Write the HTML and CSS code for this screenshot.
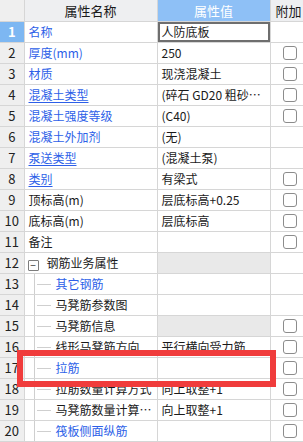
FILE: index.html
```html
<!DOCTYPE html>
<html lang="zh-CN">
<head>
  <meta charset="UTF-8">
  <title>属性编辑</title>
  <link rel="stylesheet" href="styles.css">
</head>
<body>
  <div class="grid">
    <table class="props">
      <colgroup>
        <col class="c-num">
        <col class="c-name">
        <col class="c-value">
        <col class="c-extra">
      </colgroup>
      <thead>
        <tr>
          <th class="num"></th>
          <th>属性名称</th>
          <th class="active">属性值</th>
          <th class="extra">附加</th>
        </tr>
      </thead>
      <tbody>
        <tr>
          <td class="num selected">1</td>
          <td class="name blue">名称</td>
          <td class="value editing">人防底板</td>
          <td class="extra"></td>
        </tr>
        <tr>
          <td class="num">2</td>
          <td class="name blue">厚度(mm)</td>
          <td class="value">250</td>
          <td class="extra"><span class="check"></span></td>
        </tr>
        <tr>
          <td class="num">3</td>
          <td class="name blue">材质</td>
          <td class="value">现浇混凝土</td>
          <td class="extra"><span class="check"></span></td>
        </tr>
        <tr>
          <td class="num">4</td>
          <td class="name blue link">混凝土类型</td>
          <td class="value">(碎石 GD20 粗砂水泥42.5)</td>
          <td class="extra"><span class="check"></span></td>
        </tr>
        <tr>
          <td class="num">5</td>
          <td class="name blue">混凝土强度等级</td>
          <td class="value">(C40)</td>
          <td class="extra"><span class="check"></span></td>
        </tr>
        <tr>
          <td class="num">6</td>
          <td class="name blue">混凝土外加剂</td>
          <td class="value">(无)</td>
          <td class="extra"></td>
        </tr>
        <tr>
          <td class="num">7</td>
          <td class="name blue link">泵送类型</td>
          <td class="value">(混凝土泵)</td>
          <td class="extra"></td>
        </tr>
        <tr>
          <td class="num">8</td>
          <td class="name blue link">类别</td>
          <td class="value">有梁式</td>
          <td class="extra"><span class="check"></span></td>
        </tr>
        <tr>
          <td class="num">9</td>
          <td class="name">顶标高(m)</td>
          <td class="value">层底标高+0.25</td>
          <td class="extra"><span class="check"></span></td>
        </tr>
        <tr>
          <td class="num">10</td>
          <td class="name">底标高(m)</td>
          <td class="value">层底标高</td>
          <td class="extra"><span class="check"></span></td>
        </tr>
        <tr>
          <td class="num">11</td>
          <td class="name">备注</td>
          <td class="value"></td>
          <td class="extra"><span class="check"></span></td>
        </tr>
        <tr>
          <td class="num">12</td>
          <td class="name group"><span class="toggle">−</span>钢筋业务属性</td>
          <td class="value locked"></td>
          <td class="extra"></td>
        </tr>
        <tr>
          <td class="num">13</td>
          <td class="name child blue">其它钢筋</td>
          <td class="value"></td>
          <td class="extra"></td>
        </tr>
        <tr>
          <td class="num">14</td>
          <td class="name child">马凳筋参数图</td>
          <td class="value"></td>
          <td class="extra"></td>
        </tr>
        <tr>
          <td class="num">15</td>
          <td class="name child">马凳筋信息</td>
          <td class="value locked"></td>
          <td class="extra"><span class="check"></span></td>
        </tr>
        <tr>
          <td class="num">16</td>
          <td class="name child">线形马凳筋方向</td>
          <td class="value">平行横向受力筋</td>
          <td class="extra"><span class="check"></span></td>
        </tr>
        <tr>
          <td class="num">17</td>
          <td class="name child blue">拉筋</td>
          <td class="value"></td>
          <td class="extra"><span class="check"></span></td>
        </tr>
        <tr>
          <td class="num">18</td>
          <td class="name child">拉筋数量计算方式</td>
          <td class="value">向上取整+1</td>
          <td class="extra"><span class="check"></span></td>
        </tr>
        <tr>
          <td class="num">19</td>
          <td class="name child">马凳筋数量计算方式</td>
          <td class="value">向上取整+1</td>
          <td class="extra"><span class="check"></span></td>
        </tr>
        <tr>
          <td class="num">20</td>
          <td class="name child blue">筏板侧面纵筋</td>
          <td class="value"></td>
          <td class="extra"><span class="check"></span></td>
        </tr>
      </tbody>
    </table>

    <!-- annotation drawn over row 17 -->
    <div class="mark"></div>
  </div>
</body>
</html>
```

FILE: styles.css
```css
* {
  box-sizing: border-box;
  margin: 0;
  padding: 0;
}

body {
  width: 303px;
  height: 442px;
  overflow: hidden;
  background-color: #fff;
  font-family: "Noto Sans CJK SC", "Noto Sans", sans-serif;
  font-size: 12px;
  color: #1a1a1a;
}

.grid {
  position: relative;
  width: 303px;
  height: 442px;
  overflow: hidden;
}

.props {
  width: 310px;
  table-layout: fixed;
  border-collapse: collapse;
}

.c-num { width: 24px; }
.c-name { width: 133px; }
.c-value { width: 113px; }
.c-extra { width: 40px; }

th,
td {
  height: 21px;
  border: 1px solid #d6d6d6;
  white-space: nowrap;
  overflow: hidden;
  text-overflow: ellipsis;
  line-height: 19px;
  padding: 0;
}

thead th {
  border-top: none;
  background-color: #eeeff1;
  font-weight: normal;
  text-align: center;
  font-size: 13px;
}

thead th.active {
  background-color: #8ec0f6;
  color: #fff;
}

thead th.extra {
  text-align: left;
  padding-left: 5px;
  text-overflow: clip;
}

.num,
thead th.num {
  border-left: none;
  background-color: #efefef;
  text-align: center;
  font-size: 13px;
  color: #222;
}

.num.selected {
  background-color: #7db7f2;
  color: #fff;
  font-weight: bold;
}

.name {
  padding-left: 4px;
}

.value {
  padding-left: 4px;
}

.value.editing {
  box-shadow: inset 0 0 0 2px #6e6e6e;
}

.value.locked {
  background-color: #e9e9e9;
}

.blue {
  color: #2d5fe8;
}

.link {
  text-decoration: underline;
  text-underline-offset: 2px;
}

.group {
  padding-left: 3px;
}

.toggle {
  display: inline-block;
  width: 11px;
  height: 11px;
  margin-right: 8px;
  border: 1px solid #7d7d7d;
  border-radius: 1px;
  font-size: 10px;
  line-height: 8px;
  text-align: center;
  vertical-align: -1px;
  color: #333;
}

/* tree lines for the child rows */
.child {
  position: relative;
  padding-left: 31px;
}

.child::before {
  content: "";
  position: absolute;
  left: 9px;
  top: 0;
  bottom: 0;
  border-left: 1px solid #cfcfcf;
}

.child::after {
  content: "";
  position: absolute;
  left: 12px;
  width: 14px;
  top: 10px;
  border-top: 1px solid #cfcfcf;
}

.extra {
  text-align: left;
  padding-left: 12px;
}

.check {
  display: inline-block;
  width: 14px;
  height: 14px;
  margin-top: 3px;
  border: 1px solid #8c8c8c;
  border-radius: 3px;
  background-color: #fff;
  vertical-align: top;
}

.mark {
  position: absolute;
  left: 17px;
  top: 350px;
  width: 259px;
  height: 37px;
  border: 6px solid #f03c3c;
}
```
